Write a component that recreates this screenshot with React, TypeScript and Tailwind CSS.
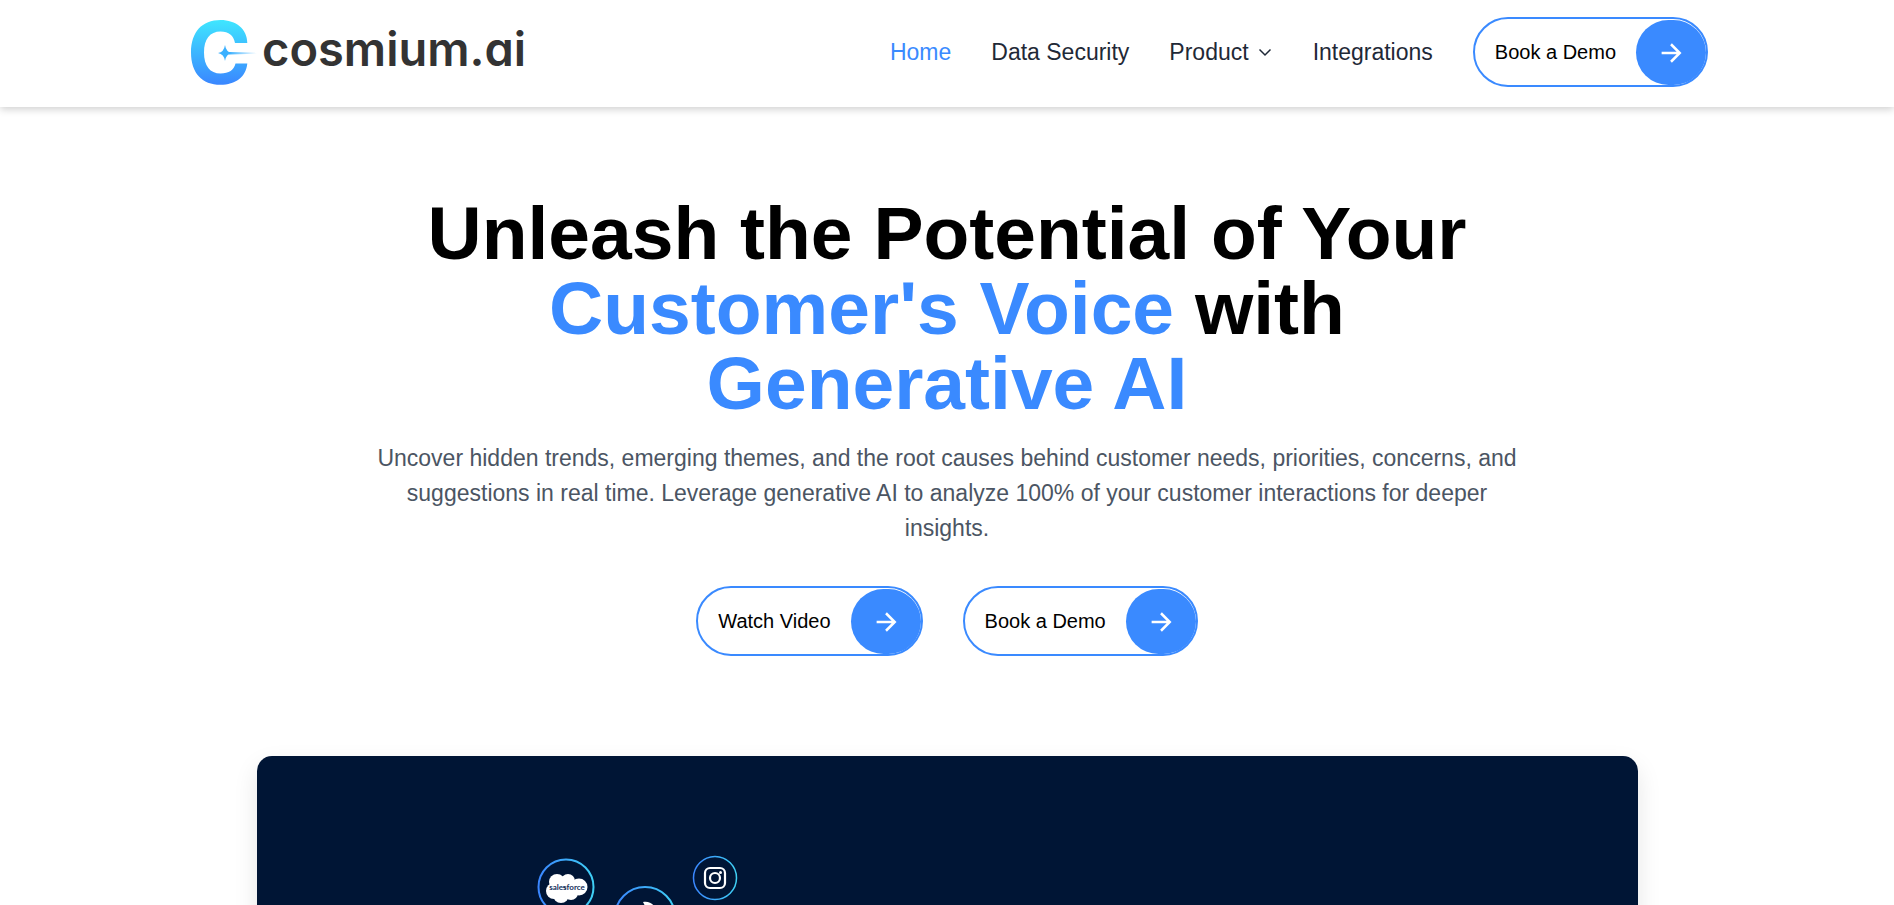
import React from "react";

function ArrowIcon() {
  return (
    <svg viewBox="0 0 24 24" className="size-[30px]" fill="none" stroke="currentColor" strokeWidth="2" aria-hidden="true">
      <path d="M4.5 12h14.5M12 5l7 7-7 7" />
    </svg>
  );
}

function PillButton({ label }: { label: string }) {
  return (
    <button
      type="button"
      className="flex h-[70px] shrink-0 cursor-pointer items-center gap-5 rounded-full border-2 border-[#3a8aff] bg-white pl-5 text-xl whitespace-nowrap text-black"
    >
      <span>{label}</span>
      <span className="flex h-[65px] w-[70px] items-center justify-center self-end rounded-full bg-[#3a8aff] text-white">
        <ArrowIcon />
      </span>
    </button>
  );
}

function Logo() {
  return (
    <a href="#" className="flex shrink-0 items-start text-[#333333]">
      <svg viewBox="0 0 76 70" className="h-[70px] w-[76px]" aria-hidden="true">
        <defs>
          <linearGradient id="mark" x1="0" y1="0" x2="0" y2="1">
            <stop offset="0" stopColor="#3fe6ff" />
            <stop offset="1" stopColor="#3a86ff" />
          </linearGradient>
          <linearGradient id="trail" x1="0" y1="0" x2="1" y2="0">
            <stop offset="0" stopColor="#3ab0ff" />
            <stop offset="1" stopColor="#3ab0ff" stopOpacity="0" />
          </linearGradient>
        </defs>
        <path
          fill="url(#mark)"
          d="M61.300 26H49C47.500 18.500 43 14.500 34.500 14.500C24 14.500 18 22 18 35.500C18 49 24 56.500 34.500 56.500C43 56.500 48 53 49.500 46.500H61.300C60 60 49.500 67.800 34.500 67.800C16 67.800 5 56 5 35.500C5 15 16 3 34.500 3C50 3 61.300 12 61.300 26Z"
        />
        <path fill="#3ab0ff" d="M39 28Q40 35 46 36Q40 37 39 44Q38 37 32 36Q38 35 39 28Z" />
        <path fill="url(#trail)" d="M43 35L71 35.600V36.800L43 37.400Z" />
      </svg>
      <span className="font-['Inter',sans-serif] text-[47px] leading-[64px] font-semibold [font-feature-settings:'cv11']">
        cosmium.ai
      </span>
    </a>
  );
}

function Header() {
  return (
    <header className="relative bg-white px-5 pt-[17px] pb-5 shadow-[0_2px_8px_rgba(0,0,0,0.2)]">
      <div className="mx-auto flex max-w-[1522px] items-center justify-between gap-10">
        <Logo />
        <nav className="flex items-center gap-10 text-[23px] whitespace-nowrap text-[#1f2937]">
          <a href="#" className="text-[#3a8aff]">Home</a>
          <a href="#security">Data Security</a>
          <button type="button" className="flex cursor-pointer items-center gap-2">
            Product
            <svg viewBox="0 0 16 16" className="size-4" fill="none" stroke="currentColor" strokeWidth="1.500" aria-hidden="true">
              <path d="M2.500 5.500l5.500 5.500 5.500-5.500" />
            </svg>
          </button>
          <a href="#integrations">Integrations</a>
          <PillButton label="Book a Demo" />
        </nav>
      </div>
    </header>
  );
}

function Showcase() {
  return (
    <section className="mx-auto mt-[100px] max-w-[1381px] overflow-hidden rounded-[15px] bg-[#001535] shadow-[0_10px_25px_rgba(0,0,0,0.1)]">
      <svg viewBox="0 0 1381 300" className="block w-full" role="img" aria-label="Connected sources">
        <defs>
          <linearGradient id="ring" x1="0" y1="0" x2="1" y2="0">
            <stop offset="0" stopColor="#3a86ff" />
            <stop offset="1" stopColor="#3fd0f5" />
          </linearGradient>
        </defs>
        <circle cx="309" cy="131" r="27.500" fill="none" stroke="url(#ring)" strokeWidth="2" />
        <g fill="#ffffff">
          <circle cx="300" cy="126" r="8" />
          <circle cx="311" cy="125" r="7" />
          <circle cx="322" cy="131" r="8.500" />
          <circle cx="297" cy="135" r="8" />
          <circle cx="304" cy="139" r="8" />
          <circle cx="314" cy="137" r="7" />
        </g>
        <text x="310" y="134" textAnchor="middle" fontSize="8" fontWeight="700" fontFamily="Lato, sans-serif" fill="#14305c">
          salesforce
        </text>
        <circle cx="388" cy="161" r="30" fill="none" stroke="url(#ring)" strokeWidth="2" />
        <path fill="#ffffff" d="M386 146C391 145 395 147 397 150H388Z" />
        <circle cx="458" cy="122" r="21.500" fill="none" stroke="url(#ring)" strokeWidth="1.500" />
        <g fill="none" stroke="#ffffff" strokeWidth="2.200">
          <rect x="448" y="112" width="20" height="20" rx="5" />
          <circle cx="458" cy="122" r="5" />
        </g>
        <circle cx="463.500" cy="116.500" r="1.500" fill="#ffffff" />
      </svg>
    </section>
  );
}

export default function App() {
  return (
    <div className="h-screen overflow-hidden bg-white font-['Liberation_Sans',Arial,sans-serif]">
      <Header />
      <main className="px-5 pt-[89px]">
        <div className="mx-auto flex max-w-[1150px] flex-col items-center text-center">
          <h1 className="text-[75px] leading-[75px] font-bold text-black">
            Unleash the Potential of Your <span className="text-[#3a8aff]">Customer's Voice</span> with{" "}
            <span className="text-[#3a8aff]">Generative AI</span>
          </h1>
          <p className="mt-5 text-[23px] leading-[35px] text-[#4b5563]">
            Uncover hidden trends, emerging themes, and the root causes behind customer needs, priorities, concerns, and
            suggestions in real time. Leverage generative AI to analyze 100% of your customer interactions for deeper
            insights.
          </p>
          <div className="mt-10 flex flex-wrap justify-center gap-10">
            <PillButton label="Watch Video" />
            <PillButton label="Book a Demo" />
          </div>
        </div>
        <Showcase />
      </main>
    </div>
  );
}
